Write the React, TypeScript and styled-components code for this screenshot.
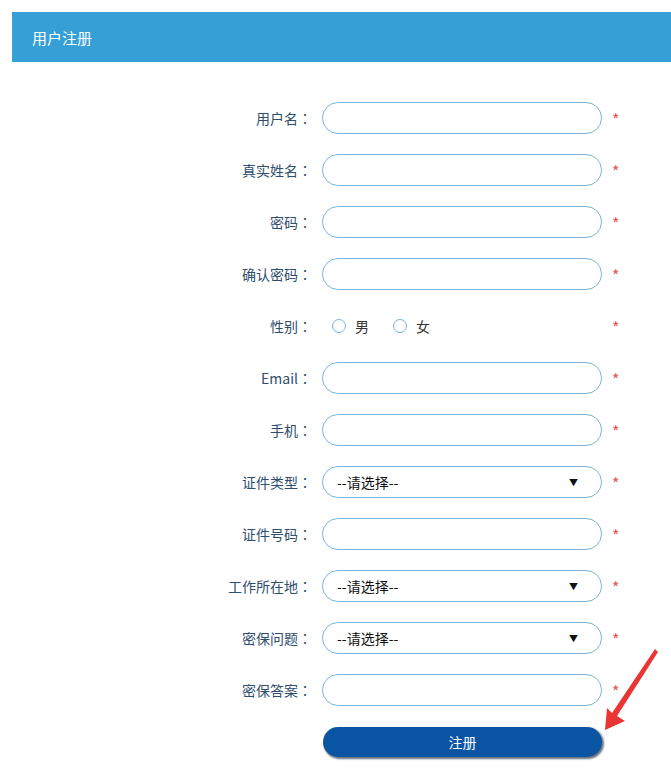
import React from 'react';
import styled, { createGlobalStyle } from 'styled-components';

const GlobalStyle = createGlobalStyle`
  html, body {
    margin: 0;
    padding: 0;
    background: #ffffff;
  }
  body {
    font-family: "Microsoft YaHei", "Noto Sans CJK SC", "Noto Sans", sans-serif;
  }
`;

const Page = styled.div`
  position: relative;
  width: 671px;
  height: 778px;
  overflow: hidden;
`;

const Header = styled.div`
  margin: 12px 0 0 12px;
  height: 50px;
  background: #369fd6;
  color: #ffffff;
  font-size: 15px;
  display: flex;
  align-items: center;
  padding-left: 20px;
`;

const Form = styled.form`
  margin-top: 30px;
  display: grid;
  grid-template-columns: 312px 280px auto;
  grid-auto-rows: 52px;
  column-gap: 10px;
  align-items: center;
`;

const Label = styled.label`
  text-align: right;
  font-size: 14px;
  color: #2f4d6e;
`;

// centred full-width colon, as the original page's font draws it
const Colon = styled.span`
  font-family: "Noto Sans CJK TC", "Noto Sans CJK JP", sans-serif;
`;

const Input = styled.input`
  box-sizing: border-box;
  width: 280px;
  height: 32px;
  border: 1px solid #7ab7dc;
  border-radius: 16px;
  background: #ffffff;
  padding: 0 14px;
  font-size: 14px;
  outline: none;
`;

const Required = styled.span`
  color: #e8545a;
  font-size: 16px;
  margin-top: 2px;
`;

const RadioGroup = styled.div`
  display: flex;
  align-items: center;
  padding-left: 10px;
  gap: 24px;
`;

const RadioOption = styled.label`
  display: flex;
  align-items: center;
  gap: 9px;
  font-size: 14px;
  color: #333;
`;

const RadioCircle = styled.span`
  box-sizing: border-box;
  width: 14px;
  height: 14px;
  border-radius: 50%;
  border: 1.5px solid #74b5dd;
  background: #fff;
`;

const SelectWrap = styled.div`
  position: relative;
  width: 280px;
  height: 32px;
`;

const Select = styled.select`
  box-sizing: border-box;
  appearance: none;
  -webkit-appearance: none;
  width: 100%;
  height: 100%;
  border: 1px solid #7ab7dc;
  border-radius: 16px;
  background: #ffffff;
  padding: 0 14px;
  font-family: inherit;
  font-size: 14px;
  color: #111;
  outline: none;
`;

const Caret = styled.span`
  position: absolute;
  right: 24px;
  top: 50%;
  transform: translateY(-50%);
  font-size: 9px;
  color: #111;
  pointer-events: none;
`;

const SubmitButton = styled.button`
  box-sizing: border-box;
  width: 279px;
  height: 30px;
  margin-left: 1px;
  border: none;
  border-radius: 15px;
  background: #0a55a3;
  color: #ffffff;
  font-family: inherit;
  font-size: 14px;
  box-shadow: 1px 2px 2px #6e7781, 2px 1px 2px #8a939c;
  cursor: pointer;
`;

const Arrow = styled.svg`
  position: absolute;
  left: 0;
  top: 0;
  pointer-events: none;
`;

type Field = {
  kind: 'text' | 'select' | 'radio';
  label: string;
};

const fields: Field[] = [
  { kind: 'text', label: '用户名' },
  { kind: 'text', label: '真实姓名' },
  { kind: 'text', label: '密码' },
  { kind: 'text', label: '确认密码' },
  { kind: 'radio', label: '性别' },
  { kind: 'text', label: 'Email' },
  { kind: 'text', label: '手机' },
  { kind: 'select', label: '证件类型' },
  { kind: 'text', label: '证件号码' },
  { kind: 'select', label: '工作所在地' },
  { kind: 'select', label: '密保问题' },
  { kind: 'text', label: '密保答案' },
];

const renderControl = (field: Field) => {
  if (field.kind === 'radio') {
    return (
      <RadioGroup>
        <RadioOption><RadioCircle />男</RadioOption>
        <RadioOption><RadioCircle />女</RadioOption>
      </RadioGroup>
    );
  }
  if (field.kind === 'select') {
    return (
      <SelectWrap>
        <Select defaultValue="">
          <option value="">--请选择--</option>
        </Select>
        <Caret>▼</Caret>
      </SelectWrap>
    );
  }
  return <Input type="text" />;
};

export default function App() {
  return (
    <Page>
      <GlobalStyle />
      <Header>用户注册</Header>
      <Form onSubmit={(e) => e.preventDefault()}>
        {fields.map((field) => (
          <React.Fragment key={field.label}>
            <Label>
              {field.label}
              <Colon>：</Colon>
            </Label>
            {renderControl(field)}
            <Required>*</Required>
          </React.Fragment>
        ))}
        <span />
        <SubmitButton type="submit">注册</SubmitButton>
      </Form>
      {/* red annotation arrow */}
      <Arrow width="671" height="778" viewBox="0 0 671 778">
        <polygon
          points="655,649 658,652 617,716 625,721 605,730 607,708 612,713"
          fill="#ea3535"
        />
      </Arrow>
    </Page>
  );
}
